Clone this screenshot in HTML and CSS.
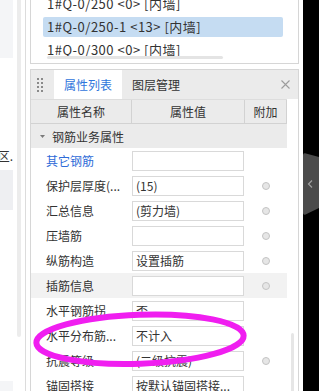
FILE: index.html
```html
<!DOCTYPE html>
<html lang="zh-CN">
<head>
<meta charset="utf-8">
<title>属性列表</title>
<link rel="stylesheet" href="styles.css">
</head>
<body>
<div class="screen">
  <aside class="left">
    <div class="left-content">
      <div class="lbox lbox-top"></div>
      <div class="ltext"><span>构件列表 选择区.</span></div>
      <div class="lbox lbox-mid"></div>
      <div class="lbox lbox-bot"></div>
    </div>
    <div class="lscroll"></div>
  </aside>

  <main class="main">
    <section class="tree">
      <ul class="tree-list">
        <li class="tree-item">1#Q-0/250 &lt;0&gt; [内墙]</li>
        <li class="tree-item selected">1#Q-0/250-1 &lt;13&gt; [内墙]</li>
        <li class="tree-item">1#Q-0/300 &lt;0&gt; [内墙]</li>
      </ul>
      <div class="hscroll"></div>
    </section>

    <section class="props">
      <div class="tabs">
        <div class="grip">
          <svg width="6" height="14" viewBox="0 0 6 14"><g fill="#8a8a8a"><rect x="0" y="0" width="2" height="2"/><rect x="4" y="0" width="2" height="2"/><rect x="0" y="4" width="2" height="2"/><rect x="4" y="4" width="2" height="2"/><rect x="0" y="8" width="2" height="2"/><rect x="4" y="8" width="2" height="2"/><rect x="0" y="12" width="2" height="2"/><rect x="4" y="12" width="2" height="2"/></g></svg>
        </div>
        <div class="tab active">属性列表</div>
        <div class="tab">图层管理</div>
        <div class="tabs-spacer"></div>
        <div class="close">
          <svg width="9" height="9" viewBox="0 0 9 9"><path d="M0.5 0.5 L8.5 8.5 M8.5 0.5 L0.5 8.5" stroke="#9c9c9c" stroke-width="1.1" fill="none"/></svg>
        </div>
      </div>

      <div class="props-body">
        <div class="table">
          <div class="head">
            <div class="hcell">属性名称</div>
            <div class="hcell">属性值</div>
            <div class="hcell">附加</div>
          </div>
          <div class="group">
            <svg class="caret" width="5" height="3" viewBox="0 0 5 3"><path d="M0 0 L5 0 L2.5 3 Z" fill="#7a7a7a"/></svg>
            <span>钢筋业务属性</span>
          </div>

          <div class="row">
            <div class="label link">其它钢筋</div>
            <div class="value"><div class="input"></div></div>
            <div class="extra"></div>
          </div>
          <div class="row">
            <div class="label">保护层厚度(...</div>
            <div class="value"><div class="input">(15)</div></div>
            <div class="extra"><span class="dot"></span></div>
          </div>
          <div class="row">
            <div class="label">汇总信息</div>
            <div class="value"><div class="input">(剪力墙)</div></div>
            <div class="extra"><span class="dot"></span></div>
          </div>
          <div class="row">
            <div class="label">压墙筋</div>
            <div class="value"><div class="input"></div></div>
            <div class="extra"><span class="dot"></span></div>
          </div>
          <div class="row">
            <div class="label">纵筋构造</div>
            <div class="value"><div class="input">设置插筋</div></div>
            <div class="extra"><span class="dot"></span></div>
          </div>
          <div class="row hover">
            <div class="label">插筋信息</div>
            <div class="value"><div class="input"></div></div>
            <div class="extra"><span class="dot"></span></div>
          </div>
          <div class="row">
            <div class="label">水平钢筋拐...</div>
            <div class="value"><div class="input">否</div></div>
            <div class="extra"></div>
          </div>
          <div class="row">
            <div class="label">水平分布筋...</div>
            <div class="value"><div class="input">不计入</div></div>
            <div class="extra"></div>
          </div>
          <div class="row">
            <div class="label">抗震等级</div>
            <div class="value"><div class="input">(二级抗震)</div></div>
            <div class="extra"><span class="dot"></span></div>
          </div>
          <div class="row">
            <div class="label">锚固搭接</div>
            <div class="value"><div class="input">按默认锚固搭接...</div></div>
            <div class="extra"></div>
          </div>
        </div>
        <div class="vscroll"><div class="vthumb"></div></div>
      </div>
    </section>
  </main>

  <div class="gutter"></div>
  <div class="dark">
    <svg class="collapse" width="16" height="62" viewBox="0 0 16 62">
      <path d="M0 2 Q0 0 2 0.3 L16 4 L16 55 L2 61.7 Q0 62 0 60 Z" fill="#4b4b4b"/>
      <path d="M9 27.5 L5.5 31 L9 34.5" stroke="#a0a0a0" stroke-width="1.2" fill="none"/>
    </svg>
  </div>

  <svg class="annotation" width="319" height="391" viewBox="0 0 319 391">
    <ellipse cx="140" cy="339.2" rx="103.7" ry="24.5" transform="rotate(-2 140 339.2)" fill="none" stroke="#f01ef0" stroke-width="6"/>
  </svg>
</div>
</body>
</html>
```
FILE: styles.css
```css
* { box-sizing: border-box; margin: 0; padding: 0; }
html, body { width: 319px; height: 391px; overflow: hidden; background: #fff; }
body {
  font-family: "Noto Sans CJK SC", "Noto Sans", sans-serif;
  font-size: 12px;
  color: #333;
}
.screen { position: relative; display: flex; width: 319px; height: 391px; }

/* left pane */
.left { width: 26px; flex-shrink: 0; border-right: 1px solid #dcdcdc; display: flex; }
.left-content { width: 13px; display: flex; flex-direction: column; overflow: hidden; }
.lbox-top { height: 60px; background: #f4f5f7; }
.ltext {
  margin-top: 90px; height: 16px; line-height: 16px;
  display: flex; justify-content: flex-end; overflow: hidden; white-space: nowrap;
}
.ltext span { flex-shrink: 0; }
.lbox-mid { margin-top: 6px; height: 42px; background: #eeeff2; }
.lbox-bot { margin-top: 171px; height: 10px; background: #f4f5f7; }
.lscroll { margin-left: 4px; width: 4px; height: 337px; background: #ececec; border-radius: 0 0 2px 2px; }

/* main column */
.main { margin-left: 4px; width: 269px; flex-shrink: 0; display: flex; flex-direction: column; }

.tree { height: 64px; border: 1px solid #d6d6d6; border-top: none; position: relative; overflow: hidden; }
.tree-list { list-style: none; margin-top: -6px; padding: 0 15px 0 12px; display: flex; flex-direction: column; gap: 3px; }
.tree-item { height: 20px; line-height: 20px; padding-left: 4px; font-size: 13px; letter-spacing: 0.5px; white-space: nowrap; color: #333; }
.tree-item.selected { background: #c5dcf2; border-radius: 2px; }
.hscroll { position: absolute; left: 16px; top: 56px; width: 176px; height: 3px; border-radius: 2px; background: #e4e4e4; }

.props { margin-top: 5px; flex: 1; min-height: 0; border: 1px solid #d6d6d6; border-bottom: none; display: flex; flex-direction: column; }
.tabs { height: 29px; flex-shrink: 0; background: #ebebeb; display: flex; align-items: stretch; }
.grip { width: 23px; display: flex; align-items: center; padding-left: 6px; }
.tab { width: 68px; display: flex; align-items: center; justify-content: center; color: #333; }
.tab.active { background: #fff; color: #2f75dc; }
.tabs-spacer { flex: 1; }
.close { width: 26px; display: flex; align-items: center; justify-content: center; }

.props-body { flex: 1; min-height: 0; display: flex; }
.table { width: 256px; flex-shrink: 0; }
.head {
  display: grid; grid-template-columns: 101px 113px 42px;
  height: 25px; background: #ebebeb;
  border-top: 1px solid #dddddd; border-bottom: 1px solid #d2d2d2;
}
.hcell { border-right: 1px solid #d2d2d2; display: flex; align-items: center; justify-content: center; color: #333; }
.group { height: 24px; background: #ebebeb; display: flex; align-items: center; padding-left: 9px; gap: 7px; }
.caret { display: block; }

.row { display: grid; grid-template-columns: 101px 113px 42px; height: 25px; }
.row.hover { background: #f2f2f2; }
.label {
  padding: 3px 4px 0 15px; height: 23px; line-height: 20px;
  white-space: nowrap; overflow: hidden;
}
.label.link { color: #2e6bd8; }
.value { padding-top: 3px; }
.input {
  width: 112px; height: 20px; line-height: 18px; padding-left: 3px;
  border: 1px solid #d9d9d9; background: #fff; white-space: nowrap; overflow: hidden;
}
.extra { display: flex; justify-content: center; padding-top: 9px; }
.dot { width: 8px; height: 8px; border-radius: 50%; background: #e6e6e6; border: 1px solid #c4c4c4; }

.vscroll { width: 11px; padding-left: 4px; }
.vthumb { width: 3px; height: 60px; margin-top: 234px; background: #e6e6e6; border-radius: 2px; }

/* right edge */
.gutter { width: 4px; flex-shrink: 0; }
.dark { width: 16px; flex-shrink: 0; background: #000; }
.collapse { display: block; margin-top: 153px; }

.annotation { position: absolute; left: 0; top: 0; pointer-events: none; }
```
